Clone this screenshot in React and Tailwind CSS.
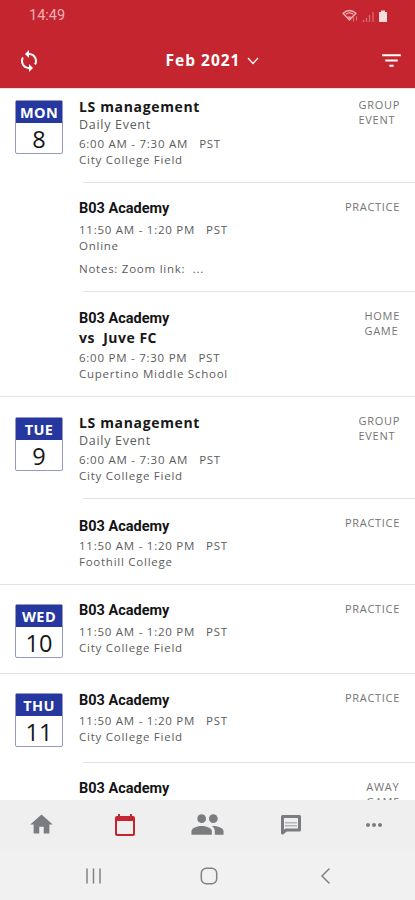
import React from 'react'
import { MdCalendarToday, MdFilterList, MdHome, MdMoreHoriz, MdSync } from 'react-icons/md'

const LS = {
  title: 'LS management',
  wide: true,
  subtitle: 'Daily Event',
  time: '6:00 AM - 7:30 AM',
  timeGap: 'mt-[3px]',
  place: 'City College Field',
  type: ['GROUP', 'EVENT'],
  typeGap: 'mt-0',
}

const ACADEMY = {
  title: 'B03 Academy',
  time: '11:50 AM - 1:20 PM',
  timeGap: 'mt-0.5',
  place: 'City College Field',
  type: ['PRACTICE'],
  typeGap: 'mt-px',
}

const DAYS = [
  {
    name: 'MON',
    date: 8,
    badge: 'pt-[11px]',
    events: [
      { ...LS, box: 'h-[94px] pt-2' },
      {
        ...ACADEMY,
        box: 'h-[109px] pt-[15px]',
        place: 'Online',
        notes: 'Notes: Zoom link:  ...',
      },
      {
        ...ACADEMY,
        box: 'h-[104px] pt-4',
        opponent: 'vs  Juve FC',
        time: '6:00 PM - 7:30 PM',
        place: 'Cupertino Middle School',
        type: ['HOME', 'GAME'],
        typeGap: 'mt-0',
      },
    ],
  },
  {
    name: 'TUE',
    date: 9,
    badge: 'pt-5',
    events: [
      { ...LS, box: 'h-[102px] pt-4' },
      {
        ...ACADEMY,
        box: 'h-[85px] pt-[17px]',
        timeGap: 'mt-0',
        place: 'Foothill College',
        typeGap: '-mt-px',
      },
    ],
  },
  {
    name: 'WED',
    date: 10,
    badge: 'pt-[19px]',
    events: [{ ...ACADEMY, box: 'h-[88px] pt-[15px]' }],
  },
  {
    name: 'THU',
    date: 11,
    badge: 'pt-[19px]',
    events: [
      { ...ACADEMY, box: 'h-[89px] pt-4', timeGap: 'mt-px', typeGap: 'mt-0' },
      {
        ...ACADEMY,
        box: 'h-[89px] pt-[15px]',
        type: ['AWAY', 'GAME'],
      },
    ],
  },
]

const StatusBar = () => (
  <div className="flex h-8 items-center justify-between pl-[29px] pr-[26px] text-[#f0b0b4]">
    <span className="font-[Roboto,sans-serif] text-[14.5px]">14:49</span>
    <svg width="47" height="14" viewBox="0 0 47 14" fill="none">
      <path d="M1 4.2Q7.5 -1.2 14 4.2L7.5 11Z" stroke="currentColor" strokeWidth="1.4" strokeLinejoin="round" />
      <path d="M3.8 5.2Q7.5 2.4 11.2 5.2" stroke="currentColor" strokeWidth="1.3" />
      <path d="M5.5 7.5h4L7.5 10z" fill="currentColor" />
      <path d="M11.5 8.5v4M14.5 7.5v4" stroke="currentColor" strokeOpacity=".6" />
      <path d="M21.5 11v2M24.5 9v4M27.5 6v7M31 3v10" stroke="currentColor" strokeOpacity=".5" strokeWidth="1.3" />
      <path d="M37 3h2V1.5h4V3h2v10h-8z" fill="#fbdcde" />
    </svg>
  </div>
)

const Header = () => (
  <header className="h-[89px] shrink-0 border-b border-[#f3dcd9] bg-[#c5252f]">
    <StatusBar />
    <div className="flex h-[57px] items-center justify-between pl-[17px] pr-[11px] text-white">
      <MdSync size={24} />
      <div className="flex items-center gap-[7px] pl-[5px]">
        <span className="text-[15.5px] font-bold tracking-[1px]">Feb 2021</span>
        <svg width="12" height="8" viewBox="0 0 12 8" fill="none" stroke="currentColor" strokeWidth="1.3">
          <path d="M1 1l5 5.5L11 1" />
        </svg>
      </div>
      <MdFilterList size={25} />
    </div>
  </header>
)

const DateBadge = ({ name, date }) => (
  <div className="h-[54px] w-12 rounded-[2px] border border-[#9299c4] text-center">
    <div className="h-[22px] bg-[#2637a0] text-[14.5px] leading-6 font-bold tracking-[0.4px] text-white">{name}</div>
    <div className="text-[23.5px] leading-[33px] font-medium text-[#161616]">{date}</div>
  </div>
)

const Event = ({ event }) => (
  <div className={event.box}>
    <div className="flex justify-between pr-[15px]">
      <div className="text-[11.5px] leading-4 tracking-[0.75px] whitespace-pre text-[#5c5c5c]">
        {event.wide ? (
          <div className="text-[14px] leading-5 font-bold tracking-[0.65px] text-[#181818]">{event.title}</div>
        ) : (
          <div className="font-[Roboto,sans-serif] text-[14.5px] leading-[22px] font-bold tracking-normal text-[#141414]">
            {event.title}
          </div>
        )}
        {event.opponent && (
          <div className="-mt-px text-[14px] leading-[18px] font-bold tracking-[0.5px] text-[#181818]">
            {event.opponent}
          </div>
        )}
        {event.subtitle && <div className="text-[12.5px] tracking-[0.7px]">{event.subtitle}</div>}
        <div className={event.opponent ? 'mt-[3px]' : event.timeGap}>
          {event.time}
          <span className="pl-[11px]">PST</span>
        </div>
        <div>{event.place}</div>
        {event.notes && <div className="mt-[7px]">{event.notes}</div>}
      </div>
      <div className={`text-[11px] leading-[15px] tracking-[0.7px] text-[#747474] ${event.typeGap}`}>
        {event.type.map((t) => (
          <div key={t}>{t}</div>
        ))}
      </div>
    </div>
  </div>
)

const Day = ({ day }) => (
  <section className="flex border-b border-[#dfe3e5]">
    <div className={`w-[79px] shrink-0 pl-[15px] ${day.badge}`}>
      <DateBadge name={day.name} date={day.date} />
    </div>
    <div className="flex-1">
      {day.events.map((e, i) => (
        <div key={i} className="relative">
          <Event event={e} />
          {i < day.events.length - 1 && <div className="absolute right-0 bottom-0 left-1 h-px bg-[#dfe3e5]" />}
        </div>
      ))}
    </div>
  </section>
)

const PeopleIcon = () => (
  <svg width="35" height="35" viewBox="0 0 24 24" fill="currentColor">
    <circle cx="8" cy="8" r="3" />
    <circle cx="16" cy="8" r="3" />
    <path d="M8 13c-2.33 0-7 1.17-7 3.5V19h14v-2.5c0-2.33-4.67-3.5-7-3.5z" />
    <path d="M16 13c-.29 0-.62.02-.97.05 1.16.84 1.97 1.97 1.97 3.45V19h6v-2.5c0-2.33-4.67-3.5-7-3.5z" />
  </svg>
)

const MessageIcon = () => (
  <svg width="22" height="22" viewBox="0 0 22 22" fill="none">
    <path d="M2.5 2.5h17v13.5h-13.5l-3.5 3z" stroke="currentColor" strokeWidth="3" strokeLinejoin="round" />
    <path d="M5 8.7h12M5 11.7h12" stroke="currentColor" strokeOpacity=".5" strokeWidth="1.5" />
  </svg>
)

const TabBar = () => (
  <nav className="grid h-[51px] grid-cols-5 place-items-center bg-[#efeff0] pb-[2px] text-[#7b7c7f]">
    <MdHome size={27} />
    <MdCalendarToday size={24} className="text-[#c5252f]" />
    <PeopleIcon />
    <MessageIcon />
    <MdMoreHoriz size={24} />
  </nav>
)

const SystemBar = () => (
  <div className="flex h-[49px] items-center justify-between bg-[#f1f1f1] pr-[84px] pl-[85px] text-[#828282]">
    <svg width="17" height="18" viewBox="0 0 17 18" stroke="currentColor" strokeWidth="1.5">
      <path d="M2 1.5v15M8.5 1.5v15M15 1.5v15" />
    </svg>
    <svg className="mr-[5px]" width="18" height="18" viewBox="0 0 18 18" fill="none" stroke="currentColor" strokeWidth="1.5">
      <rect x="1.3" y="1.3" width="15.4" height="15.4" rx="5" />
    </svg>
    <svg width="11" height="18" viewBox="0 0 11 18" fill="none" stroke="currentColor" strokeWidth="1.5">
      <path d="M9.5 1.5L2 9l7.5 7.5" />
    </svg>
  </div>
)

const App = () => {
  return (
    <div className="flex h-[900px] w-[415px] flex-col overflow-hidden bg-white font-['Open_Sans',sans-serif]">
      <Header />
      <main className="min-h-0 flex-1 overflow-hidden">
        {DAYS.map((day) => (
          <Day key={day.name} day={day} />
        ))}
      </main>
      <footer className="shrink-0">
        <TabBar />
        <SystemBar />
      </footer>
    </div>
  )
}

export default App
